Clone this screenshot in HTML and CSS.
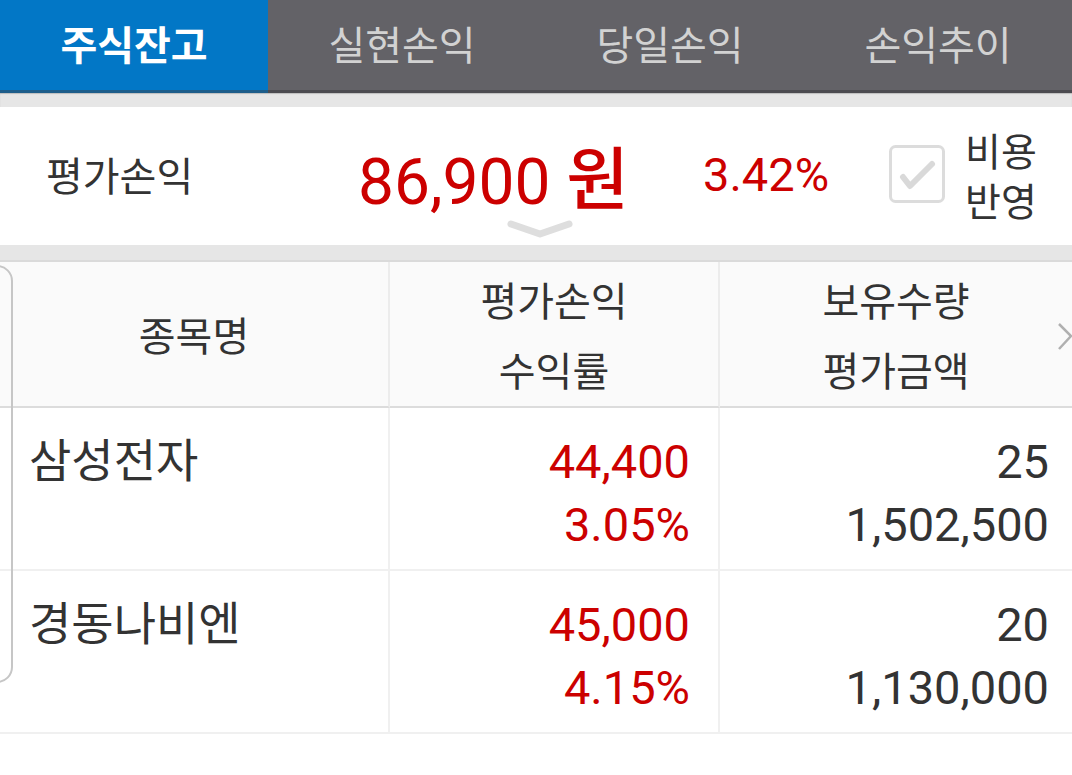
FILE: index.html
```html
<!DOCTYPE html>
<html>
<head>
  <title>주식잔고</title>
  <meta name="viewport" content="width=device-width, initial-scale=1.0">
  <link rel="stylesheet" href="styles.css">
</head>
<body>
  <div class="tabs">
    <div class="tab active">주식잔고</div>
    <div class="tab">실현손익</div>
    <div class="tab">당일손익</div>
    <div class="tab">손익추이</div>
  </div>
  <div class="band"></div>
  <div class="summary">
    <div class="sum-label">평가손익</div>
    <div class="sum-value">86,900 <span class="won">원</span></div>
    <div class="sum-rate">3.42%</div>
    <div class="check">
      <svg width="56" height="58" viewBox="0 0 56 58">
        <rect x="1.5" y="1.5" width="53" height="55" rx="5" fill="#fff" stroke="#dcdcdc" stroke-width="3"/>
        <path d="M14 32 L21 41 L43 19" fill="none" stroke="#d9d9d9" stroke-width="6" stroke-linecap="round" stroke-linejoin="round"/>
      </svg>
    </div>
    <div class="check-label">비용<br>반영</div>
    <svg class="expand" width="66" height="20" viewBox="0 0 66 20">
      <path d="M4 5 L33 15 L62 5" fill="none" stroke="#dedede" stroke-width="7" stroke-linecap="round" stroke-linejoin="round"/>
    </svg>
  </div>
  <div class="band band-low"></div>
  <div class="table">
    <div class="cell head">종목명</div>
    <div class="cell head">평가손익<br>수익률</div>
    <div class="cell head">보유수량<br>평가금액</div>

    <div class="cell name">삼성전자</div>
    <div class="cell num up">44,400<br>3.05%</div>
    <div class="cell num">25<br>1,502,500</div>

    <div class="cell name">경동나비엔</div>
    <div class="cell num up">45,000<br>4.15%</div>
    <div class="cell num">20<br>1,130,000</div>

    <svg class="more" width="16" height="30" viewBox="0 0 16 30">
      <path d="M2 2 L14 14 L2 27" fill="none" stroke="#b0b0b0" stroke-width="2.5"/>
    </svg>
    <div class="drawer"></div>
  </div>
</body>
</html>
```
FILE: styles.css
```css
body {
  margin: 0;
  font-family: Roboto, "Noto Sans CJK KR", sans-serif;
  background-color: #fff;
  color: #333;
  width: 1072px;
  height: 775px;
  overflow: hidden;
}
.tabs {
  display: flex;
  height: 90px;
  background-color: #636267;
  border-bottom: 3px solid #4c4b50;
}
.tab {
  flex: 1;
  display: flex;
  align-items: center;
  justify-content: center;
  font-size: 40px;
  color: #d2d2d2;
  padding-bottom: 4px;
}
.tab.active {
  background-color: #0277c6;
  color: #fff;
  font-weight: bold;
  box-shadow: 0 3px 0 #1d5d8a;
}
.band {
  height: 14px;
  background-color: #e6e6e6;
  box-shadow: inset 0 1px 1px rgba(0, 0, 0, 0.18);
}
.band-low {
  height: 15px;
  box-shadow: none;
  border-bottom: 2px solid #dadada;
}
.summary {
  position: relative;
  display: flex;
  align-items: center;
  height: 138px;
  padding-left: 46px;
  padding-bottom: 4px;
  box-sizing: border-box;
}
.sum-label {
  width: 312px;
  font-size: 40px;
}
.sum-value {
  width: 345px;
  font-size: 64px;
  color: #cc0000;
}
.won {
  font-size: 68px;
  font-weight: 500;
}
.sum-rate {
  width: 186px;
  font-size: 47px;
  color: #cc0000;
}
.check {
  width: 56px;
  height: 58px;
  margin-right: 20px;
}
.check-label {
  font-size: 39px;
  line-height: 50px;
  margin-top: 8px;
}
.expand {
  position: absolute;
  left: 507px;
  bottom: 6px;
}
.table {
  position: relative;
  display: grid;
  grid-template-columns: 390px 330px 1fr;
}
.cell {
  box-sizing: border-box;
  border-bottom: 2px solid #f0f0f0;
  border-right: 2px solid #f0f0f0;
}
.cell:nth-child(3n) {
  border-right: none;
}
.head {
  height: 146px;
  display: flex;
  align-items: center;
  justify-content: center;
  text-align: center;
  font-size: 40px;
  line-height: 70px;
  background-color: #fafafa;
  border-bottom-color: #dcdcdc;
  border-right-color: #ececec;
  padding-top: 8px;
}
.name {
  height: 163px;
  font-size: 46px;
  line-height: 63px;
  padding: 22px 0 0 29px;
}
.num {
  height: 163px;
  font-size: 47px;
  line-height: 63px;
  text-align: right;
  padding: 22px 23px 0 0;
}
.num.up {
  color: #cc0000;
  padding-right: 28px;
}
.more {
  position: absolute;
  right: -1px;
  top: 60px;
}
.drawer {
  position: absolute;
  left: -20px;
  top: 3px;
  width: 33px;
  height: 418px;
  box-sizing: border-box;
  border: 2px solid #c6c6c6;
  border-radius: 16px;
}
```
